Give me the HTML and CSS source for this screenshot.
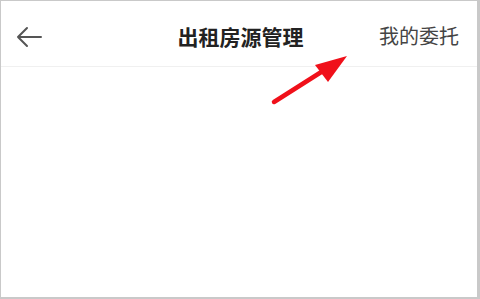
FILE: index.html
```html
<!doctype html>
<html>
	<head>
		<title>出租房源管理</title>
		<link rel="stylesheet" href="styles.css">
	</head>
	<body>
		<div class="frame">
			<div class="header">
				<span class="back">
					<svg width="26" height="22" viewBox="0 0 26 22">
						<path d="M25 11 H2 M11 2 L2 11 L11 20" fill="none" stroke="#555" stroke-width="2" stroke-linecap="round" stroke-linejoin="round" />
					</svg>
				</span>
				<span class="title">出租房源管理</span>
				<span class="action">我的委托</span>
			</div>
			<div class="content"></div>

			<!-- annotation arrow pointing at the action -->
			<svg class="pointer" width="480" height="299" viewBox="0 0 480 299">
				<line x1="274" y1="102" x2="326" y2="69" stroke="#f0101a" stroke-width="4.5" stroke-linecap="round" />
				<polygon points="347,56 315,65 328,82" fill="#f0101a" />
			</svg>
		</div>
	</body>
</html>
```

FILE: styles.css
```css
html, body {
	padding: 0;
	margin: 0;
}
body {
	font-family: "Noto Sans CJK SC", "Noto Sans", sans-serif;
	background: #fff;
}
.frame {
	position: relative;
	width: 480px;
	height: 299px;
	box-sizing: border-box;
	border: 1px solid #c9c9c9;
	border-right-width: 3px;
	border-bottom-width: 2px;
	display: flex;
	flex-direction: column;
}
.header {
	height: 65px;
	border-bottom: 1px solid #f0f0f0;
	display: flex;
	align-items: center;
	justify-content: space-between;
	padding: 0 18px 0 15px;
}
.back {
	width: 120px;
	display: flex;
	align-items: center;
	padding-top: 7px;
}
.title {
	font-size: 21px;
	font-weight: bold;
	color: #222;
	padding: 4px 0 0 6px;
}
.action {
	width: 120px;
	text-align: right;
	font-size: 20px;
	color: #444;
	padding-top: 4px;
}
.content {
	flex: 1;
}
.pointer {
	position: absolute;
	left: -1px;
	top: -1px;
}
```
